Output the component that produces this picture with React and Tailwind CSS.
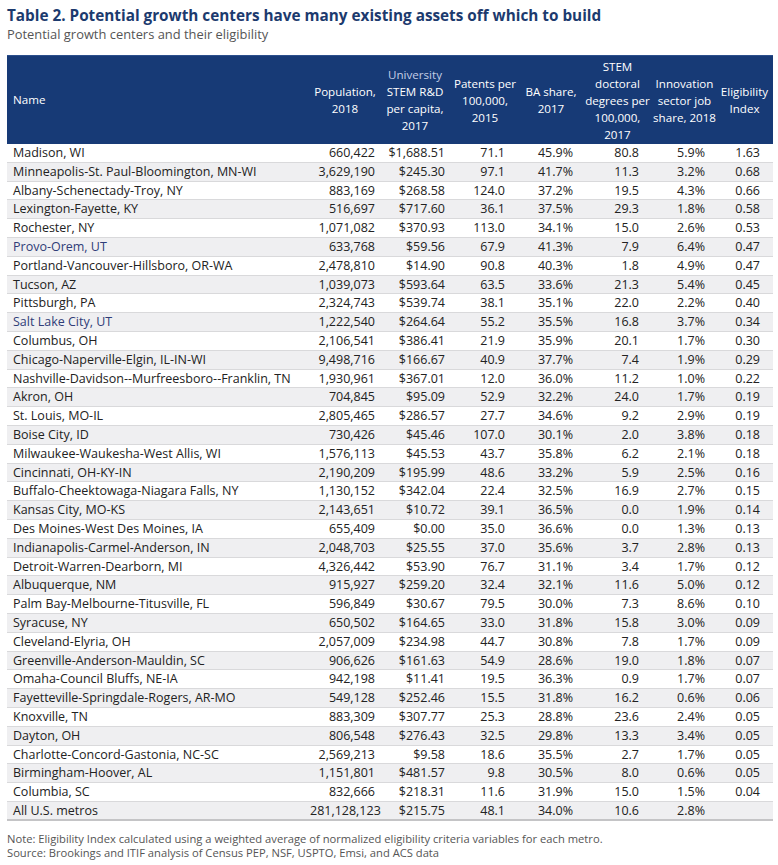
import React from 'react';

// ── Table data ───────────────────────────────────────────────────────────────
const ROWS = [
    ['Madison, WI', '660,422', '$1,688.51', '71.1', '45.9%', '80.8', '5.9%', '1.63'],
    ['Minneapolis-St. Paul-Bloomington, MN-WI', '3,629,190', '$245.30', '97.1', '41.7%', '11.3', '3.2%', '0.68'],
    ['Albany-Schenectady-Troy, NY', '883,169', '$268.58', '124.0', '37.2%', '19.5', '4.3%', '0.66'],
    ['Lexington-Fayette, KY', '516,697', '$717.60', '36.1', '37.5%', '29.3', '1.8%', '0.58'],
    ['Rochester, NY', '1,071,082', '$370.93', '113.0', '34.1%', '15.0', '2.6%', '0.53'],
    ['Provo-Orem, UT', '633,768', '$59.56', '67.9', '41.3%', '7.9', '6.4%', '0.47', true],
    ['Portland-Vancouver-Hillsboro, OR-WA', '2,478,810', '$14.90', '90.8', '40.3%', '1.8', '4.9%', '0.47'],
    ['Tucson, AZ', '1,039,073', '$593.64', '63.5', '33.6%', '21.3', '5.4%', '0.45'],
    ['Pittsburgh, PA', '2,324,743', '$539.74', '38.1', '35.1%', '22.0', '2.2%', '0.40'],
    ['Salt Lake City, UT', '1,222,540', '$264.64', '55.2', '35.5%', '16.8', '3.7%', '0.34', true],
    ['Columbus, OH', '2,106,541', '$386.41', '21.9', '35.9%', '20.1', '1.7%', '0.30'],
    ['Chicago-Naperville-Elgin, IL-IN-WI', '9,498,716', '$166.67', '40.9', '37.7%', '7.4', '1.9%', '0.29'],
    ['Nashville-Davidson--Murfreesboro--Franklin, TN', '1,930,961', '$367.01', '12.0', '36.0%', '11.2', '1.0%', '0.22'],
    ['Akron, OH', '704,845', '$95.09', '52.9', '32.2%', '24.0', '1.7%', '0.19'],
    ['St. Louis, MO-IL', '2,805,465', '$286.57', '27.7', '34.6%', '9.2', '2.9%', '0.19'],
    ['Boise City, ID', '730,426', '$45.46', '107.0', '30.1%', '2.0', '3.8%', '0.18'],
    ['Milwaukee-Waukesha-West Allis, WI', '1,576,113', '$45.53', '43.7', '35.8%', '6.2', '2.1%', '0.18'],
    ['Cincinnati, OH-KY-IN', '2,190,209', '$195.99', '48.6', '33.2%', '5.9', '2.5%', '0.16'],
    ['Buffalo-Cheektowaga-Niagara Falls, NY', '1,130,152', '$342.04', '22.4', '32.5%', '16.9', '2.7%', '0.15'],
    ['Kansas City, MO-KS', '2,143,651', '$10.72', '39.1', '36.5%', '0.0', '1.9%', '0.14'],
    ['Des Moines-West Des Moines, IA', '655,409', '$0.00', '35.0', '36.6%', '0.0', '1.3%', '0.13'],
    ['Indianapolis-Carmel-Anderson, IN', '2,048,703', '$25.55', '37.0', '35.6%', '3.7', '2.8%', '0.13'],
    ['Detroit-Warren-Dearborn, MI', '4,326,442', '$53.90', '76.7', '31.1%', '3.4', '1.7%', '0.12'],
    ['Albuquerque, NM', '915,927', '$259.20', '32.4', '32.1%', '11.6', '5.0%', '0.12'],
    ['Palm Bay-Melbourne-Titusville, FL', '596,849', '$30.67', '79.5', '30.0%', '7.3', '8.6%', '0.10'],
    ['Syracuse, NY', '650,502', '$164.65', '33.0', '31.8%', '15.8', '3.0%', '0.09'],
    ['Cleveland-Elyria, OH', '2,057,009', '$234.98', '44.7', '30.8%', '7.8', '1.7%', '0.09'],
    ['Greenville-Anderson-Mauldin, SC', '906,626', '$161.63', '54.9', '28.6%', '19.0', '1.8%', '0.07'],
    ['Omaha-Council Bluffs, NE-IA', '942,198', '$11.41', '19.5', '36.3%', '0.9', '1.7%', '0.07'],
    ['Fayetteville-Springdale-Rogers, AR-MO', '549,128', '$252.46', '15.5', '31.8%', '16.2', '0.6%', '0.06'],
    ['Knoxville, TN', '883,309', '$307.77', '25.3', '28.8%', '23.6', '2.4%', '0.05'],
    ['Dayton, OH', '806,548', '$276.43', '32.5', '29.8%', '13.3', '3.4%', '0.05'],
    ['Charlotte-Concord-Gastonia, NC-SC', '2,569,213', '$9.58', '18.6', '35.5%', '2.7', '1.7%', '0.05'],
    ['Birmingham-Hoover, AL', '1,151,801', '$481.57', '9.8', '30.5%', '8.0', '0.6%', '0.05'],
    ['Columbia, SC', '832,666', '$218.31', '11.6', '31.9%', '15.0', '1.5%', '0.04'],
    ['All U.S. metros', '281,128,123', '$215.75', '48.1', '34.0%', '10.6', '2.8%', ''],
];

const GRID = 'grid grid-cols-[303px_70px_70px_70px_62px_71px_63px_57px]';

// right padding for each numeric column, so the figures line up with the reference
const PAD = ['pr-[5px]', 'pr-[5px]', 'pr-[15px]', 'pr-[9px]', 'pr-[14px]', 'pr-[11px]', 'pr-[13px]'];

function HeadCell({ children }) {
    return (
        <div className="flex items-center justify-center text-center leading-[17px] whitespace-nowrap">{children}</div>
    );
}

function Row({ row, index }) {
    const [name, ...vals] = row.slice(0, 8);
    const accent = row[8];
    const striped = index % 2 === 1;
    const last = index === ROWS.length - 1;
    return (
        <div
            className={`${GRID} h-[18.8px] items-center ${striped ? 'bg-[#efeff1]' : 'bg-white'} ${
                last ? 'border-b-2 border-[#c4c4c6]' : 'border-b border-[#d9d9db]'
            }`}
        >
            <div className={`pl-[6px] whitespace-nowrap ${accent ? 'text-[#2f3d78]' : ''}`}>{name}</div>
            {vals.map((v, i) => (
                <div key={i} className={`text-right whitespace-nowrap ${PAD[i]}`}>{v}</div>
            ))}
        </div>
    );
}

export default function App() {
    return (
        <div className="w-[778px] h-[865px] bg-white px-[7px] pt-[4px] text-[#222] font-['Open_Sans',sans-serif]">
            {/* ── Title ── */}
            <h1 className="text-[15.3px] font-bold leading-[22px] text-[#1c3a6e]">
                Table 2. Potential growth centers have many existing assets off which to build
            </h1>
            <p className="text-[12.9px] leading-[17px] text-[#555]">Potential growth centers and their eligibility</p>

            {/* ── Table ── */}
            <div className="mt-[12px] w-[766px] text-[12.5px]">
                <div className={`${GRID} h-[89px] bg-[#173a76] text-white text-[11.6px] border-t border-[#2c4f8c]`}>
                    <div className="flex items-center pl-[6px]">Name</div>
                    <HeadCell>Population,<br />2018</HeadCell>
                    <HeadCell>
                        <span>
                            <span className="text-[#c3cde6]">University</span><br />STEM R&amp;D<br />per capita,<br />2017
                        </span>
                    </HeadCell>
                    <HeadCell>Patents per<br />100,000,<br />2015</HeadCell>
                    <HeadCell>BA share,<br />2017</HeadCell>
                    <HeadCell>STEM<br />doctoral<br />degrees per<br />100,000,<br />2017</HeadCell>
                    <HeadCell>Innovation<br />sector job<br />share, 2018</HeadCell>
                    <HeadCell>Eligibility<br />Index</HeadCell>
                </div>
                {ROWS.map((r, i) => (
                    <Row key={i} row={r} index={i} />
                ))}
            </div>

            {/* ── Notes ── */}
            <div className="mt-[11px] text-[11.2px] leading-[14px] text-[#555]">
                <p>Note: Eligibility Index calculated using a weighted average of normalized eligibility criteria variables for each metro.</p>
                <p>Source: Brookings and ITIF analysis of Census PEP, NSF, USPTO, Emsi, and ACS data</p>
            </div>
        </div>
    );
}
